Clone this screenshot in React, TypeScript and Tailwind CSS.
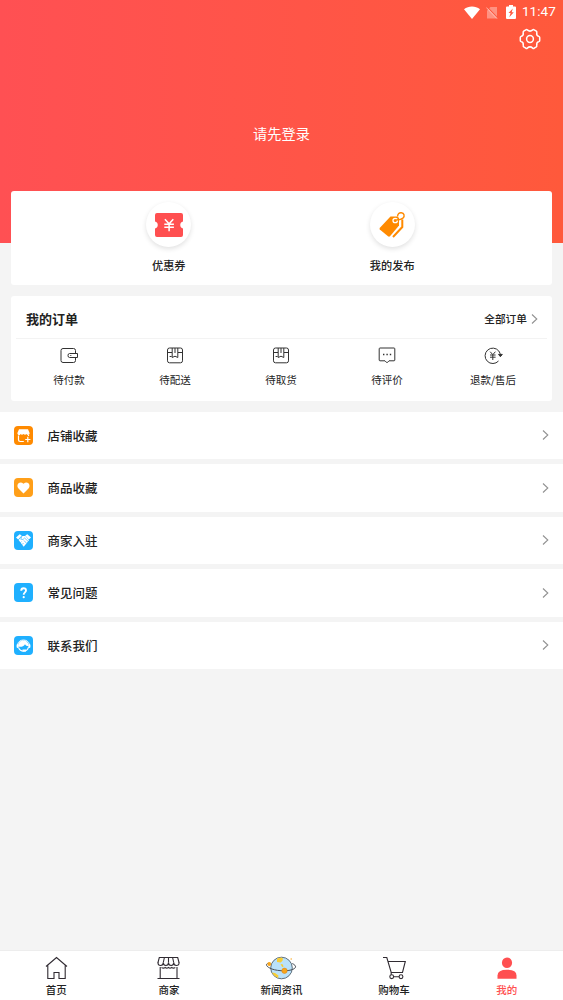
import type { ReactNode } from "react";

const RED = "#ff4f50";

function StatusBar() {
  return (
    <div className="flex h-6 items-center justify-end pr-[7px] text-white">
      <svg width="16" height="13" viewBox="0 0 16 13" fill="currentColor" className="mr-[6px]">
        <path d="M0 3.2C4.6-.4 11.4-.4 16 3.2L8 13z" />
      </svg>
      <svg width="12" height="13" viewBox="0 0 12 13" className="mr-[8px]">
        <path d="M4.5 1H11v11.5H1V4.5z" fill="#fff" opacity=".35" />
        <path d="M1.300 1.200l10 10.500" stroke="#ff5a42" strokeWidth="1.200" />
        <path d="M.3 1.500l10.700 11" stroke="#fff" strokeWidth="1" opacity=".55" />
      </svg>
      <svg width="10" height="14" viewBox="0 0 10 14" className="mr-[6px]">
        <path d="M3 0h4v1.5h2q1 0 1 1V13q0 1-1 1H1q-1 0-1-1V2.5q0-1 1-1h2z" fill="#fff" />
        <path d="M6.800 3.400L2.500 7.900h2.100l-1.300 4.300L7.800 7.200H5.700z" fill="#ff5a42" />
      </svg>
      <span className="font-[Roboto,sans-serif] text-[13.5px] leading-none tracking-[0.1px]">11:47</span>
    </div>
  );
}

function SettingsIcon() {
  return (
    <svg width="22" height="22" viewBox="0 0 22 22" fill="none" stroke="#fff" strokeWidth="1.5" strokeLinejoin="round">
      <path d="M6.800 1.900Q7.500 1.200 8.300 1.900Q11 4.400 13.700 1.900Q14.500 1.200 15.200 1.900L17.300 3.200Q18 3.700 17.800 4.600Q17.200 7.700 19.800 8.400Q20.700 8.700 20.700 9.600V12.400Q20.700 13.300 19.800 13.600Q17.200 14.300 17.800 17.400Q18 18.300 17.300 18.800L15.200 20.100Q14.500 20.800 13.700 20.100Q11 17.600 8.300 20.100Q7.500 20.800 6.800 20.100L4.700 18.800Q4 18.300 4.200 17.400Q4.800 14.300 2.200 13.600Q1.300 13.300 1.300 12.400V9.600Q1.300 8.700 2.200 8.400Q4.800 7.700 4.200 4.600Q4 3.700 4.700 3.200z" />
      <circle cx="11" cy="11" r="3.4" />
    </svg>
  );
}

function CouponIcon() {
  return (
    <svg width="28" height="24" viewBox="0 0 28 24">
      <path d="M2 0h24q2 0 2 2v6.500a3.600 3.600 0 0 0 0 7V22q0 2-2 2H2q-2 0-2-2v-6.500a3.600 3.600 0 0 0 0-7V2q0-2 2-2z" fill={RED} />
      <path d="M9.900 6.200l4.200 4.600 4.200-4.600M9.300 11.300h9.600M9.300 14.300h9.600M14.100 11v7.200" stroke="#fff" strokeWidth="1.500" fill="none" />
    </svg>
  );
}

function TagIcon() {
  return (
    <svg width="27" height="27" viewBox="0 0 27 27" fill="none">
      <path d="M11.500 5.500h7l1.500 1.500v7.500L11 25.300Q10 26 9 25.300L.8 18.500Q.2 17.700.9 16.800z" fill="#ff8a00" />
      <circle cx="16.200" cy="9.500" r="2.200" stroke="#fff" strokeWidth="1.300" />
      <path d="M18.600 5.500C18.600 2.800 20.300 1.500 22.300 1.700c3 .3 3.600 3.500 1.800 5.200-1.400 1.300-4.600 2-6.900 2.100" stroke="#ff8a00" strokeWidth="1.400" />
      <path d="M23.300 8.500v7.500L14 26" stroke="#ff8a00" strokeWidth="2" />
    </svg>
  );
}

function WalletIcon() {
  return (
    <>
      <path d="M15.500 6V3.500Q15.500 1.500 13.500 1.500H3Q1 1.500 1 3.500V13.500Q1 15.500 3 15.500H13.500Q15.500 15.500 15.500 13.500V11" />
      <path d="M9.500 6.500h8v4h-8q-1.500 0-1.500-2t1.500-2zM10.300 8.500h1" />
    </>
  );
}

function ParcelIcon() {
  return (
    <>
      <rect x="1.500" y="1" width="15" height="14.800" rx="2" />
      <path d="M1.500 5.500H6M12 5.500h4.500M6.200 1v9.500L9 9.200l2.800 1.300V1M9 1v5M3.600 9.500h2" />
    </>
  );
}

function CommentIcon() {
  return (
    <>
      <path d="M2 1h14q.8 0 .8.800V13q0 .8-.8.800h-5L9 15.800 7 13.800H2q-.8 0-.8-.8V1.800Q1.200 1 2 1z" />
      <path d="M5 7.500h1.400M8.400 7.500h1.400M11.800 7.500h1.400" strokeWidth="1.500" />
    </>
  );
}

function RefundIcon() {
  return (
    <>
      <path d="M14.800 4A7.700 7.700 0 1 0 14.500 14" />
      <path d="M14.800 4Q16.300 6 16.500 8.500" />
      <path d="M14.500 7.400h3.800l-1.900 2.300z" fill="#333" />
      <path d="M6.200 4.700l2.600 3 2.600-3M6 8h5.600M6 10.200h5.600M8.800 8v5" />
    </>
  );
}

function ShopIcon() {
  return (
    <>
      <path d="M5 3.300h9l1.700 4q-.3 1.800-1.600 1.800T12.500 8Q11 9.600 9.500 8 8 9.600 6.500 8 6 9.200 5 9.200T3.300 7.300z" fill="#fff" />
      <path d="M4.500 9.500v4.300q0 1.700 1.700 1.700h3.600M14.500 9v1M13.800 10.800v5.400M11.200 13.500h5.200" stroke="#fff" strokeWidth="1.200" fill="none" />
    </>
  );
}

function HeartIcon() {
  return <path d="M9.500 15.500L4.500 10.500C1.500 7 5.500 2.200 9.500 5.800c4-3.600 8 1.200 5 4.700z" fill="#fff" />;
}

function HandshakeIcon() {
  return (
    <>
      <path d="M2 6.600L5.700 3.300l2 1.100L4.200 8.500zM17 6.600l-3.700-3.300-2 1.100 3.500 4.100z" fill="#fff" />
      <path d="M4.600 9L8 5h3.500l3.500 4.200-5.300 6.600z" fill="#fff" />
      <path d="M8 5.300L6.700 8.200l2.300.3L10.600 7l4 3.800M6.300 11.800l1.300-1.300M8.200 13.500l1.300-1.500M10 9.500l2.500 2.700" stroke="#1fb0ff" strokeWidth=".6" fill="none" />
    </>
  );
}

function QuestionIcon() {
  return (
    <>
      <path d="M7.200 7.700Q7.200 5.200 9.600 5.200T12 7.500C12 9.400 9.700 9.400 9.700 11.800" stroke="#fff" strokeWidth="1.900" fill="none" />
      <circle cx="9.700" cy="14.200" r="1.100" fill="#fff" />
    </>
  );
}

function ServiceIcon() {
  return (
    <>
      <path d="M3.700 8.400C4.500 2.600 14.500 2.600 15.300 8.400" stroke="#fff" strokeWidth="1" fill="none" />
      <path d="M4.200 10.500C3.500 2.500 15 2.500 14.800 10.200 12.700 10.200 11.600 9.200 11 8.200 9.500 10.500 7 11.200 4.200 10.500z" fill="#fff" />
      <rect x="2.600" y="8" width="2" height="4" rx="1" fill="#fff" />
      <rect x="14.400" y="8" width="2" height="4" rx="1" fill="#fff" />
      <path d="M4.500 11.500Q6 15 9.500 15.200q4 0 5-4" stroke="#fff" strokeWidth="1.100" fill="none" />
      <path d="M8.500 13.500h3.500v2H8.500z" fill="#fff" />
    </>
  );
}

function HomeIcon() {
  return <path d="M1 10.500L11.500 1.500 22 10.500M2.800 9.500V22.500H9V16.500h5v6h6.200V9.500" />;
}

function StoreIcon() {
  return (
    <>
      <path d="M1 6.500L2.300 1.500h18.400L22 6.500M6.300 6.500L7.400 1.500M11.500 6.500v-5M16.700 6.500l-1.100-5" />
      <path d="M1 6V7q0 2.500 2.600 2.500T6.300 6.500q0 3 2.600 3t2.600-3q0 3 2.600 3t2.600-3q0 3 2.700 3T22 7V6" />
      <path d="M3.200 11v11.500M20 11v11.500M.5 22.500h22M4.500 11.500q2 1.300 3.700 0 1.500 1.300 3.300 0 1.500 1.300 3.300 0 1.500 1.300 3.500 0" />
    </>
  );
}

function CartIcon() {
  return (
    <>
      <path d="M0 1.500h3.800L8.200 16.500H19.500L22.300 5.500H5" />
      <circle cx="8.700" cy="20.700" r="1.900" />
      <circle cx="18" cy="20.700" r="1.900" />
      <path d="M8.200 16.500v2.300M10.600 20.700h5.500" />
    </>
  );
}

function GlobeIcon() {
  return (
    <svg width="32" height="24" viewBox="0 0 32 24" fill="none">
      <circle cx="16.500" cy="12" r="10.800" fill="#b9e1fa" stroke="#53616c" strokeWidth=".9" />
      <path d="M12 2.500L16 1.500 18 2.500 17.500 4.800 15.700 6.500 12 6zM15.500 8l2.500.5.500 2.700-1.500-.5zM6.800 16.500l3.200.5 3.500 2.500-.5 2.500q-4-1.500-6.200-5.500z" fill="#f8cd33" />
      <path d="M4.500 7.200C-2.500 7.500 3 14 16 14.700 27 15.500 35.500 11.500 27.300 7.500" stroke="#4a5159" strokeWidth="1" />
      <circle cx="4.300" cy="8" r="1.900" fill="#f9a51a" />
      <circle cx="19.500" cy="14.800" r="2.700" fill="#f9a51a" stroke="#d28318" strokeWidth=".5" />
      <path d="M25.500 3h1.500" stroke="#f9a51a" strokeWidth="1.200" />
    </svg>
  );
}

function PersonIcon() {
  return (
    <svg width="20" height="24" viewBox="0 0 20 24" fill={RED}>
      <ellipse cx="10" cy="6.800" rx="5.100" ry="5.300" />
      <path d="M.5 22.700V19.500Q.5 13.700 10 13.700t9.500 5.800v3.200z" />
    </svg>
  );
}

function LineIcon({ children }: { children: ReactNode }) {
  return (
    <svg width="23" height="24" viewBox="0 0 23 24" fill="none" stroke="#302b32" strokeWidth="1.100">
      {children}
    </svg>
  );
}

function Chevron({ className }: { className?: string }) {
  return (
    <svg width="7" height="10" viewBox="0 0 7 10" fill="none" stroke="#929292" strokeWidth="1.100" className={className}>
      <path d="M1 .5L5.800 5 1 9.500" />
    </svg>
  );
}

const shortcuts = [
  { label: "优惠券", icon: <CouponIcon /> },
  { label: "我的发布", icon: <TagIcon /> },
];

const orders = [
  { label: "待付款", icon: <WalletIcon /> },
  { label: "待配送", icon: <ParcelIcon /> },
  { label: "待取货", icon: <ParcelIcon /> },
  { label: "待评价", icon: <CommentIcon /> },
  { label: "退款/售后", icon: <RefundIcon /> },
];

const menu = [
  { label: "店铺收藏", color: "bg-[#ff8a00]", icon: <ShopIcon /> },
  { label: "商品收藏", color: "bg-[#ff9f19]", icon: <HeartIcon /> },
  { label: "商家入驻", color: "bg-[#1fb0ff]", icon: <HandshakeIcon /> },
  { label: "常见问题", color: "bg-[#1fb0ff]", icon: <QuestionIcon /> },
  { label: "联系我们", color: "bg-[#1fb0ff]", icon: <ServiceIcon /> },
];

const tabs = [
  { label: "首页", icon: <LineIcon><HomeIcon /></LineIcon> },
  { label: "商家", icon: <LineIcon><StoreIcon /></LineIcon> },
  { label: "新闻资讯", icon: <GlobeIcon /> },
  { label: "购物车", icon: <LineIcon><CartIcon /></LineIcon> },
  { label: "我的", icon: <PersonIcon />, active: true },
];

export default function App() {
  return (
    <div className="flex h-[1000px] w-[563px] flex-col overflow-hidden bg-[#f4f4f4] font-['Noto_Sans_CJK_SC',sans-serif] text-[#222]">
      {/* Header */}
      <header className="h-[243px] shrink-0 bg-linear-to-r from-[#ff5053] to-[#ff593b]">
        <StatusBar />
        <div className="flex justify-end pt-[3.500px] pr-[22px]">
          <SettingsIcon />
        </div>
        <p className="mt-[73.500px] text-center text-[14.2px] leading-5 text-white">请先登录</p>
      </header>

      <main className="relative -mt-[52px] flex-1">
        {/* Shortcuts */}
        <section className="mx-[11px] grid h-[93.500px] grid-cols-2 rounded-[3px] bg-white pt-[11px] pr-[48px] pl-[46px]">
          {shortcuts.map((s) => (
            <div key={s.label} className="flex flex-col items-center">
              <div className="flex size-[45px] items-center justify-center rounded-full bg-white shadow-[0_2px_5px_rgba(0,0,0,0.12)]">
                {s.icon}
              </div>
              <span className="mt-[10px] text-[11.200px] leading-4 font-medium">{s.label}</span>
            </div>
          ))}
        </section>

        {/* Orders */}
        <section className="mx-[11px] mt-[11px] h-[105.500px] rounded-[3px] bg-white px-[5px]">
          <div className="flex h-[43px] items-center justify-between border-b border-[#f3f3f3] pt-[5px] pr-[9px] pl-[10px]">
            <h2 className="text-[13px] font-bold">我的订单</h2>
            <span className="flex items-center text-[10.700px] font-medium">
              全部订单
              <Chevron className="ml-1" />
            </span>
          </div>
          <div className="grid grid-cols-5 pt-2 pr-px">
            {orders.map((o) => (
              <div key={o.label} className="flex flex-col items-center">
                <svg width="18" height="17" viewBox="0 0 18 17" fill="none" stroke="#333" strokeWidth="1" className="overflow-visible">
                  {o.icon}
                </svg>
                <span className="mt-2 text-[10.500px] leading-4">{o.label}</span>
              </div>
            ))}
          </div>
        </section>

        {/* Menu list */}
        <ul className="mt-[10.500px] space-y-[5px]">
          {menu.map((m) => (
            <li key={m.label} className="flex h-[47.500px] items-center bg-white px-[14px]">
              <span className={`size-[19px] rounded-[4px] ${m.color}`}>
                <svg width="19" height="19" viewBox="0 0 19 19">{m.icon}</svg>
              </span>
              <span className="ml-[14.500px] flex-1 pt-[1.500px] text-[12.500px] font-medium">{m.label}</span>
              <Chevron />
            </li>
          ))}
        </ul>
      </main>

      {/* Bottom navigation */}
      <nav className="grid h-[50px] shrink-0 grid-cols-5 border-t border-[#ededed] bg-white pt-[5px]">
        {tabs.map((t) => (
          <div key={t.label} className={`flex flex-col items-center ${t.active ? "text-[#ff4f50]" : ""}`}>
            {t.icon}
            <span className="mt-[2px] text-[10.500px] leading-4 font-medium">{t.label}</span>
          </div>
        ))}
      </nav>
    </div>
  );
}
